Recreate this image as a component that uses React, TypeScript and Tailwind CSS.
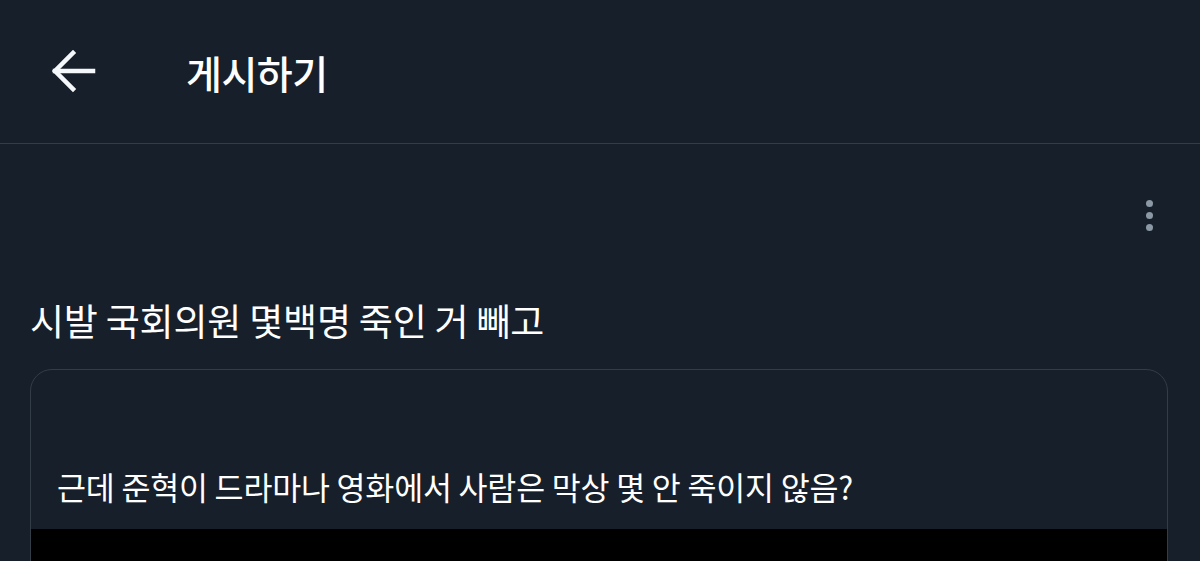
export default function App() {
  const font = { fontFamily: '"Noto Sans CJK KR", "Noto Sans", sans-serif' };

  return (
    <div className="w-[1200px] h-[561px] overflow-hidden bg-[#17202a] text-white" style={font}>
      {/* header */}
      <header className="h-[144px] flex items-center border-b border-[#333d47]">
        <div className="w-[186px] pl-[51px] flex items-center">
          <svg width="46" height="46" viewBox="0 0 46 46" fill="none" stroke="#f5f8fa" strokeWidth="4.5" strokeLinecap="square">
            <path d="M4 22 H42" />
            <path d="M22 4 L4 22 L22 40" />
          </svg>
        </div>
        <h1 className="text-[39px] font-medium tracking-[-0.5px] leading-none mt-[2px]">게시하기</h1>
      </header>

      {/* post */}
      <div className="px-[30px]">
        <div className="flex justify-end pt-[56px] pr-[17px]">
          <div className="flex flex-col gap-[5px]">
            <span className="w-[7px] h-[7px] rounded-full bg-[#8b98a5]" />
            <span className="w-[7px] h-[7px] rounded-full bg-[#8b98a5]" />
            <span className="w-[7px] h-[7px] rounded-full bg-[#8b98a5]" />
          </div>
        </div>

        <p className="mt-[71px] text-[37px] leading-none tracking-[-0.2px]">시발 국회의원 몇백명 죽인 거 빼고</p>

        {/* quoted post */}
        <div className="mt-[30px] mr-[2px] border border-[#333d47] rounded-[22px] overflow-hidden">
          <div className="h-[159px] px-[26px] pt-[101px]">
            <p className="text-[31.5px] leading-none tracking-[-0.2px]">근데 준혁이 드라마나 영화에서 사람은 막상 몇 안 죽이지 않음?</p>
          </div>
          <div className="h-[60px] bg-black" />
        </div>
      </div>
    </div>
  );
}
